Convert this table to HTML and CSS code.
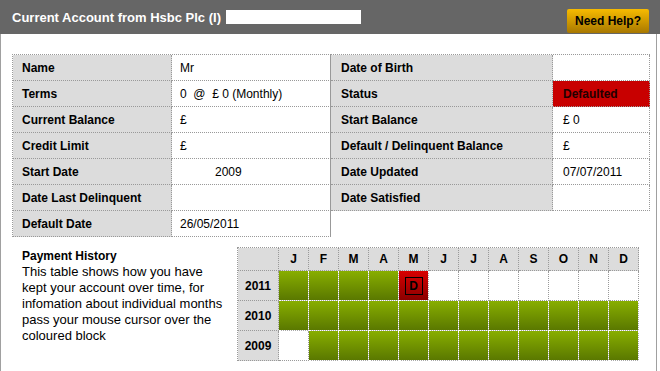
FILE: index.html
```html
<!DOCTYPE html>
<html>
<head>
<meta charset="utf-8">
<link rel="stylesheet" href="styles.css">
</head>
<body>
<div class="header">
  <div class="title">Current Account from Hsbc Plc (I)</div>
  <div class="redact"></div>
  <div class="help">Need Help?</div>
</div>
<div class="panel">
  <div class="details">
    <div class="grid left">
      <div class="lbl">Name</div><div class="val">Mr</div>
      <div class="lbl">Terms</div><div class="val pre">0  @  £ 0 (Monthly)</div>
      <div class="lbl">Current Balance</div><div class="val">£</div>
      <div class="lbl">Credit Limit</div><div class="val">£</div>
      <div class="lbl">Start Date</div><div class="val"><span class="indent">2009</span></div>
      <div class="lbl">Date Last Delinquent</div><div class="val"></div>
      <div class="lbl">Default Date</div><div class="val">26/05/2011</div>
    </div>
    <div class="grid right">
      <div class="lbl">Date of Birth</div><div class="val"></div>
      <div class="lbl">Status</div><div class="val status">Defaulted</div>
      <div class="lbl">Start Balance</div><div class="val">£ 0</div>
      <div class="lbl">Default / Delinquent Balance</div><div class="val">£</div>
      <div class="lbl">Date Updated</div><div class="val">07/07/2011</div>
      <div class="lbl">Date Satisfied</div><div class="val"></div>
    </div>
  </div>
  <div class="history">
    <div class="intro">
      <div class="intro-title">Payment History</div>
      <div class="intro-text">This table shows how you have kept your account over time, for infomation about individual months pass your mouse cursor over the coloured block</div>
    </div>
    <div class="ph">
      <div class="hd"></div>
      <div class="hd">J</div><div class="hd">F</div><div class="hd">M</div><div class="hd">A</div><div class="hd">M</div><div class="hd">J</div>
      <div class="hd">J</div><div class="hd">A</div><div class="hd">S</div><div class="hd">O</div><div class="hd">N</div><div class="hd">D</div>

      <div class="yr">2011</div>
      <div class="ok"></div><div class="ok"></div><div class="ok"></div><div class="ok"></div>
      <div class="bad"><span class="mark">D</span></div>
      <div class="no"></div><div class="no"></div><div class="no"></div><div class="no"></div><div class="no"></div><div class="no"></div><div class="no"></div>

      <div class="yr">2010</div>
      <div class="ok"></div><div class="ok"></div><div class="ok"></div><div class="ok"></div><div class="ok"></div><div class="ok"></div>
      <div class="ok"></div><div class="ok"></div><div class="ok"></div><div class="ok"></div><div class="ok"></div><div class="ok"></div>

      <div class="yr">2009</div>
      <div class="no"></div><div class="ok"></div><div class="ok"></div><div class="ok"></div><div class="ok"></div><div class="ok"></div>
      <div class="ok"></div><div class="ok"></div><div class="ok"></div><div class="ok"></div><div class="ok"></div><div class="ok"></div>
    </div>
  </div>
</div>
</body>
</html>
```
FILE: styles.css
```css
html, body {
  margin: 0;
  padding: 0;
  background: #fff;
  font-family: "Liberation Sans", Arial, sans-serif;
  font-size: 12px;
  color: #000;
}

.header {
  width: 660px;
  height: 34px;
  background: #666;
  display: flex;
  align-items: center;
  padding: 0 0 0 12px;
  box-sizing: border-box;
}

.title {
  color: #fff;
  font-weight: bold;
  font-size: 13px;
}

.redact {
  width: 135px;
  height: 14px;
  background: #fff;
  margin-left: 5px;
}

.help {
  margin-left: auto;
  margin-right: 11px;
  align-self: flex-start;
  margin-top: 9px;
  width: 82px;
  height: 24px;
  box-sizing: border-box;
  border-radius: 2px;
  background: linear-gradient(#f7bb00, #a87800);
  font-weight: bold;
  font-size: 12px;
  display: flex;
  align-items: center;
  justify-content: center;
}

.panel {
  width: 657px;
  min-height: 337px;
  box-sizing: border-box;
  border-left: 1px solid #a0a0a0;
  border-right: 1px solid #a0a0a0;
  padding: 20px 0 0 11px;
}

.details {
  display: flex;
  align-items: flex-start;
}

.grid {
  display: grid;
  grid-auto-rows: 26px;
  border-top: 1px dotted #999;
}

.grid > div {
  box-sizing: border-box;
  border-right: 1px dotted #999;
  border-bottom: 1px dotted #999;
  display: flex;
  align-items: center;
  white-space: nowrap;
}

.left {
  grid-template-columns: 159px 159px;
  border-left: 1px dotted #999;
}

.right {
  grid-template-columns: 222px 97px;
}

.lbl {
  background: #dcdcdc;
  font-weight: bold;
}

.left .lbl { padding-left: 9px; }
.left .val { padding-left: 8px; }
.left .val { border-right: 1px solid #999 !important; }
.right .lbl { padding-left: 10px; }
.right .val { padding-left: 10px; }

.pre { white-space: pre !important; }

.indent { margin-left: 35px; }

.status {
  background: #c80000;
  color: #200;
  font-weight: bold;
}

.history {
  display: flex;
  align-items: flex-start;
  margin-top: 10px;
}

.intro {
  width: 203px;
  margin: 1px 12px 0 10px;
  line-height: 16px;
}

.intro-title {
  font-weight: bold;
  font-size: 12px;
}

.intro-text {
  font-size: 13px;
}

.ph {
  display: grid;
  grid-template-columns: 41px repeat(12, 30px);
  grid-template-rows: 23px 30px 30px 30px;
  border-top: 1px dotted #999;
  border-left: 1px dotted #999;
}

.ph > div {
  box-sizing: border-box;
  border-right: 1px dotted #999;
  border-bottom: 1px dotted #999;
  display: flex;
  align-items: center;
  justify-content: center;
  font-weight: bold;
}

.hd, .yr {
  background: #dcdcdc;
}

.no {
  background: #fff;
}

.ph > .ok {
  border-color: #fff;
  background: linear-gradient(#88ae00, #5a7800) padding-box, #aaa border-box;
}

.ph > .bad {
  border-color: #fff;
  background: linear-gradient(#d80000, #8a0000) padding-box, #aaa border-box;
}

.mark {
  width: 18px;
  height: 18px;
  box-sizing: border-box;
  border: 1px solid #000;
  display: flex;
  align-items: center;
  justify-content: center;
  font-size: 12px;
  font-weight: bold;
}
```
